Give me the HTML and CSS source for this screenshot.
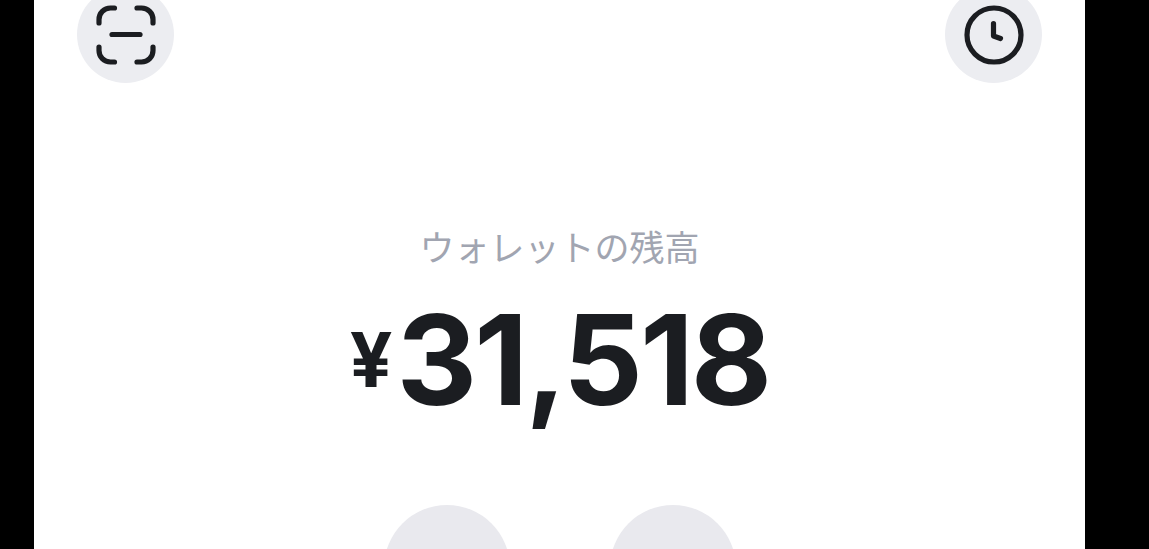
FILE: index.html
```html
<!DOCTYPE html>
<html lang="ja">
<head>
  <meta charset="UTF-8" />
  <meta name="viewport" content="width=device-width, initial-scale=1.0"/>
  <title>ウォレット</title>
  <link rel="stylesheet" href="styles.css">
</head>
<body>
  <div class="screen">
    <header class="top-bar">
      <div class="round-btn">
        <svg class="icon" viewBox="0 0 60 60" fill="none" stroke="#1b1d21" stroke-width="5.2" stroke-linecap="round" stroke-linejoin="round">
          <path d="M3 18V14.5C3 8 8 3 14.5 3H18.5"/>
          <path d="M41 3H45.5C52 3 57 8 57 14.5V18"/>
          <path d="M3 42V45.5C3 52 8 57 14.5 57H18.5"/>
          <path d="M41 57H45.5C52 57 57 52 57 45.5V42"/>
          <path d="M16 29.5H44"/>
        </svg>
      </div>
      <div class="round-btn">
        <svg class="icon" viewBox="0 0 60 60" fill="none" stroke="#1b1d21" stroke-width="5.2" stroke-linecap="round" stroke-linejoin="round">
          <circle cx="30" cy="30" r="27"/>
          <path d="M29.5 18.5V31L36.5 33.5"/>
        </svg>
      </div>
    </header>
    <main class="balance">
      <div class="balance-label">ウォレットの残高</div>
      <div class="balance-amount"><span class="yen">¥</span>31,518</div>
    </main>
    <div class="actions">
      <div class="action-btn"></div>
      <div class="action-btn"></div>
    </div>
  </div>
</body>
</html>
```

FILE: styles.css
```css
html, body { height: 100%; }
body {
  margin: 0;
  background: #000;
  overflow: hidden;
  font-family: Inter, "Noto Sans CJK JP", sans-serif;
}
.screen {
  width: 1051px;
  height: 549px;
  margin-left: 34px;
  background: #fff;
  overflow: hidden;
}
.top-bar {
  display: flex;
  justify-content: space-between;
  padding: 0 43px;
  margin-top: -14px;
}
.round-btn {
  width: 97px;
  height: 97px;
  border-radius: 50%;
  background: #ecedf1;
  display: flex;
  align-items: center;
  justify-content: center;
}
.icon {
  width: 60px;
  height: 60px;
}
.balance {
  display: flex;
  flex-direction: column;
  align-items: center;
  margin-top: 142px;
}
.balance-label {
  font-size: 35px;
  line-height: 46px;
  color: #a1a5b1;
}
.balance-amount {
  display: flex;
  align-items: center;
  margin-top: 27px;
  font-size: 125px;
  line-height: 124px;
  font-weight: 700;
  letter-spacing: -3px;
  color: #1b1d21;
}
.yen {
  font-size: 75px;
  letter-spacing: 0;
  margin-right: 4px;
}
.actions {
  display: flex;
  justify-content: center;
  gap: 100px;
  margin-top: 83px;
}
.action-btn {
  width: 126px;
  height: 126px;
  border-radius: 50%;
  background: #e9e9ee;
}
```
